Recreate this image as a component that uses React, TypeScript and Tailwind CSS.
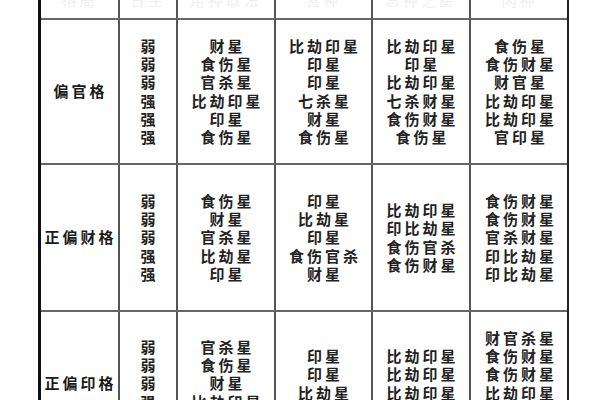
const cols = "grid grid-cols-[79px_58px_98px_97px_98px_97px]";

const header = ["格局", "日主", "用神取法", "喜神", "忌神之星", "闲神"];

const rows: { label: string; h: string; cells: string[][] }[] = [
  {
    label: "偏官格",
    h: "h-[145px]",
    cells: [
      ["弱", "弱", "弱", "强", "强", "强"],
      ["财星", "食伤星", "官杀星", "比劫印星", "印星", "食伤星"],
      ["比劫印星", "印星", "印星", "七杀星", "财星", "食伤星"],
      ["比劫印星", "印星", "比劫印星", "七杀财星", "食伤财星", "食伤星"],
      ["食伤星", "食伤财星", "财官星", "比劫印星", "比劫印星", "官印星"],
    ],
  },
  {
    label: "正偏财格",
    h: "h-[147px]",
    cells: [
      ["弱", "弱", "弱", "强", "强"],
      ["食伤星", "财星", "官杀星", "比劫星", "印星"],
      ["印星", "比劫星", "印星", "食伤官杀", "财星"],
      ["比劫印星", "印比劫星", "食伤官杀", "食伤财星"],
      ["食伤财星", "食伤财星", "官杀财星", "印比劫星", "印比劫星"],
    ],
  },
  {
    label: "正偏印格",
    h: "h-[145px]",
    cells: [
      ["弱", "弱", "弱", "强", "强"],
      ["官杀星", "食伤星", "财星", "比劫印星", "印星"],
      ["印星", "印星", "比劫星", "官杀食星"],
      ["比劫印星", "比劫印星", "比劫印星", "比劫印星"],
      ["财官杀星", "食伤财星", "食伤财星", "比劫印星", "比劫印星", "官印星"],
    ],
  },
];

const font = {
  fontFamily: '"Noto Sans CJK SC", "Noto Sans", sans-serif',
};

export default function App() {
  return (
    <div className="h-[400px] w-[600px] overflow-hidden bg-white" style={font}>
      <div className="ml-[38px] w-[531px] border-l-[3px] border-r-[2px] border-l-[#111] border-r-[#222]">
        {/* faint header, mostly lost in the scan */}
        <div className={`${cols} h-[20px] border-b-2 border-[#666]`}>
          {header.map((t, i) => (
            <div
              key={i}
              className={`flex justify-center overflow-hidden ${i < 5 ? "border-r-2 border-[#555]" : ""}`}
            >
              <span className="-mt-[9px] text-[15px] leading-[18px] tracking-[3px] text-[#f0f0f0]">
                {t}
              </span>
            </div>
          ))}
        </div>

        {rows.map((r, ri) => (
          <div key={ri} className={`${cols} ${r.h} border-b-2 border-[#666]`}>
            <div className="flex items-center justify-center border-r-2 border-[#555] pl-[2px] text-[15px] font-bold tracking-[3px] text-[#1a1a1a]">
              {r.label}
            </div>
            {r.cells.map((lines, ci) => (
              <div
                key={ci}
                className={`flex flex-col items-center justify-center pl-[3px] text-[15px] font-bold leading-[18.3px] tracking-[3px] text-[#222] ${ci < 4 ? "border-r-2 border-[#555]" : ""}`}
              >
                {lines.map((l, li) => (
                  <div key={li} className="whitespace-nowrap">
                    {l}
                  </div>
                ))}
              </div>
            ))}
          </div>
        ))}
      </div>
    </div>
  );
}
